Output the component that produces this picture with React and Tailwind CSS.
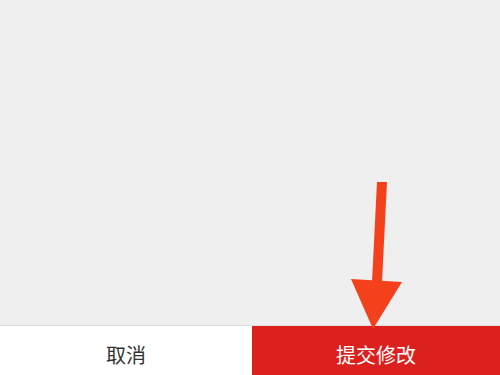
export default function App() {
  return (
    <div
      className="relative flex h-[375px] w-[500px] flex-col bg-[#efefef]"
      style={{ fontFamily: '"Noto Sans CJK SC", "Noto Sans", sans-serif' }}
    >
      <div className="flex-1" />
      <div className="flex h-[50px] border-t border-[#dddddd]">
        <button className="flex w-[252px] items-center justify-center bg-white pt-[8px] text-[20px] text-[#333333]">
          取消
        </button>
        <button className="flex flex-1 items-center justify-center bg-[#dc201e] pt-[8px] text-[20px] text-white">
          提交修改
        </button>
      </div>

      {/* 指示箭头 */}
      <svg className="absolute left-0 top-0" width="500" height="375" viewBox="0 0 500 375">
        <polygon points="377,182 387,182 382,282 372,282" fill="#f4411c" />
        <polygon points="351,279 402,282 373,329" fill="#f4411c" />
      </svg>
    </div>
  );
}
